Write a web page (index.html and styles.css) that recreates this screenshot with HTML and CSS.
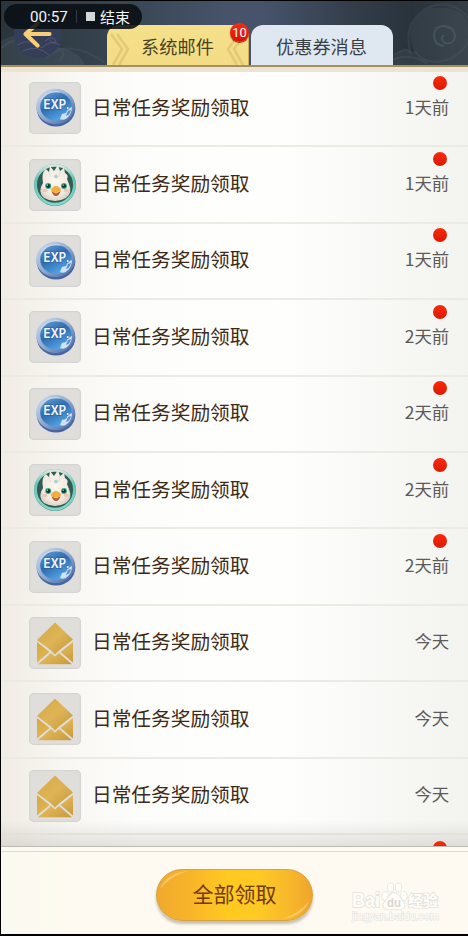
FILE: index.html
```html
<!DOCTYPE html>
<html lang="zh-CN">
<head>
<meta charset="utf-8">
<title>系统邮件</title>
<link rel="stylesheet" href="styles.css">
</head>
<body>
<svg class="defs" width="0" height="0" aria-hidden="true">
  <defs>
    <linearGradient id="ring" x1="0" y1="0" x2="1" y2="1"><stop offset="0" stop-color="#d5dfec"/><stop offset=".5" stop-color="#8fa9cf"/><stop offset="1" stop-color="#4564a3"/></linearGradient>
    <linearGradient id="disc" x1="0" y1="0" x2=".6" y2="1"><stop offset="0" stop-color="#6ba1d5"/><stop offset=".5" stop-color="#2d6cb2"/><stop offset="1" stop-color="#56a6e4"/></linearGradient>
    <linearGradient id="gold" x1="0" y1="0" x2="1" y2="1"><stop offset="0" stop-color="#d8a83f"/><stop offset=".5" stop-color="#deb457"/><stop offset="1" stop-color="#c79838"/></linearGradient>
    <linearGradient id="teal" x1="0" y1="0" x2="0" y2="1"><stop offset="0" stop-color="#d5e9e2"/><stop offset=".35" stop-color="#62c5b3"/><stop offset="1" stop-color="#7fd9cc"/></linearGradient>
    <radialGradient id="face" cx=".5" cy=".45" r=".6"><stop offset="0" stop-color="#fdf7ee"/><stop offset=".7" stop-color="#f1e9df"/><stop offset="1" stop-color="#d8c9bc"/></radialGradient>
  </defs>
  <symbol id="exp" viewBox="0 0 52 52">
    <ellipse cx="27" cy="26.5" rx="19.3" ry="18" fill="#4664a0"/>
    <ellipse cx="26.5" cy="24.5" rx="19.4" ry="17.7" fill="url(#ring)"/>
    <ellipse cx="27" cy="24.5" rx="15.8" ry="14.3" fill="url(#disc)"/>
    <path d="M12 18Q18 8 31 10" fill="none" stroke="#cfe1f4" stroke-width="1.2" opacity=".7"/>
    <path d="M31 37L33 32L37 31L39 27L43 25Q43 32 38 36Q35 39 31 37Z" fill="#cfe2f5"/>
    <path d="M37 34L39 29L42 28Q41 33 37 34Z" fill="#4a91d5"/>
    <text x="27.5" y="27" text-anchor="middle" textLength="26" lengthAdjust="spacingAndGlyphs" class="exp-text">EXP.</text>
  </symbol>
  <symbol id="bird" viewBox="0 0 52 52">
    <circle cx="26" cy="26" r="21" fill="#6c9d92"/>
    <circle cx="26" cy="25.7" r="19.4" fill="#315b54" stroke="url(#teal)" stroke-width="2.7"/>
    <path d="M14 24Q12 13 17 10L20 13L21 7L25 12L29 6L31 12L35 9L36 14Q40 16 38 20L40 25Q44 34 37 39Q26 45 15 39Q8 33 14 24Z" fill="url(#face)"/>
    <path d="M20 13L22 18M31 12L30 18" fill="none" stroke="#dedfd7" stroke-width="1"/>
    <circle cx="27" cy="17.5" r="2" fill="#a9d6d0"/>
    <circle cx="19.2" cy="27" r="3" fill="#39a691"/><circle cx="35" cy="27" r="3" fill="#39a691"/>
    <circle cx="19.3" cy="27" r="2.1" fill="#17372f"/><circle cx="34.9" cy="27" r="2.1" fill="#17372f"/>
    <circle cx="18.5" cy="26.1" r=".7" fill="#fff"/><circle cx="34.2" cy="26.1" r=".7" fill="#fff"/>
    <ellipse cx="16" cy="31.5" rx="2.5" ry="1.4" fill="#f4c1a9"/><ellipse cx="37" cy="31.5" rx="2.5" ry="1.4" fill="#f4c1a9"/>
    <path d="M22.5 32L27 34.5L31.5 32Q30 37 27 37Q24 37 22.5 32Z" fill="#b65a36"/>
    <path d="M21.5 31Q24 27 27 27Q30 27 32.3 31Q29 34 27 34Q24 34 21.5 31Z" fill="#f4ae3c"/>
  </symbol>
  <symbol id="mail" viewBox="0 0 52 52">
    <path d="M8 23L26 5.5L44 22.5L30 33.5L26 37.5L22 33.5Z" fill="url(#gold)"/>
    <path d="M8 25L20.5 35L8 45.5ZM44 25L31.5 35L44 45.5ZM9 47.2L22 36L26 39.5L30 36L43 47.2Z" fill="url(#gold)"/>
  </symbol>
</svg>

<main class="screen">
  <header class="header">
    <svg class="clouds" viewBox="0 0 467 64" aria-hidden="true">
      <g fill="none" stroke="#52636e" stroke-opacity=".25" stroke-width="2">
        <path d="M389 57Q406 43 410 53Q402 27 418 13Q438-4 459 9Q474 18 467 40Q459 58 437 61Q420 61 414 50"/>
        <path stroke-opacity=".5" d="M443 45Q433 44 433 34Q434 25 443 25Q454 26 454 36Q452 44 444 42Q438 38 443 34"/>
        <path d="M386 62Q405 49 427 63"/>
        <path d="M0 47Q21 30 48 43Q70 50 58 60M45 57Q67 36 104 62"/>
      </g>
      <path d="M414 52Q399 20 430 7Q467 4 467 26V64H390Q397 42 414 52Z" fill="#66717a" opacity=".15"/>
      <path d="M0 40Q22 26 40 47Q75 43 84 64H0Z" fill="#60737b" opacity=".22"/>
    </svg>
    <svg class="back" viewBox="0 0 48 48" aria-hidden="true">
      <circle cx="24" cy="24" r="24" fill="#353e58"/>
      <path d="M3 35Q17 27 28 38Q36 29 46 35M9 41Q23 34 35 45M31 31Q40 24 42 32Q37 34 36 30" fill="none" stroke="#66647e" stroke-width="1" opacity=".6"/>
      <path d="M23.5 13.5L11.5 24L23.5 35.5M13 24H35.5" fill="none" stroke="#f9cf75" stroke-width="4.2" stroke-linecap="round" stroke-linejoin="round"/>
    </svg>
    <div class="recorder"><span class="clock">00:57</span><i class="bar"></i><i class="stop"></i><span>结束</span></div>
    <nav class="tabs">
      <div class="tab tab-active">
        <svg class="chevrons" viewBox="0 0 142 40" preserveAspectRatio="none"><path d="M4 9L15 24L6 40M10 9L21 24L12 40M138 9L127 24L136 40M132 9L121 24L130 40" fill="none" stroke="#d8bd6c" stroke-width="2.6" opacity=".6"/></svg>
        <span>系统邮件</span><b class="badge">10</b>
      </div>
      <div class="tab tab-idle"><span>优惠券消息</span></div>
    </nav>
  </header>

  <ul class="list">
    <li class="row"><svg class="icon"><use href="#exp"/></svg><span class="title">日常任务奖励领取</span><time class="time unread">1天前</time></li>
    <li class="row"><svg class="icon"><use href="#bird"/></svg><span class="title">日常任务奖励领取</span><time class="time unread">1天前</time></li>
    <li class="row"><svg class="icon"><use href="#exp"/></svg><span class="title">日常任务奖励领取</span><time class="time unread">1天前</time></li>
    <li class="row"><svg class="icon"><use href="#exp"/></svg><span class="title">日常任务奖励领取</span><time class="time unread">2天前</time></li>
    <li class="row"><svg class="icon"><use href="#exp"/></svg><span class="title">日常任务奖励领取</span><time class="time unread">2天前</time></li>
    <li class="row"><svg class="icon"><use href="#bird"/></svg><span class="title">日常任务奖励领取</span><time class="time unread">2天前</time></li>
    <li class="row"><svg class="icon"><use href="#exp"/></svg><span class="title">日常任务奖励领取</span><time class="time unread">2天前</time></li>
    <li class="row"><svg class="icon"><use href="#mail"/></svg><span class="title">日常任务奖励领取</span><time class="time">今天</time></li>
    <li class="row"><svg class="icon"><use href="#mail"/></svg><span class="title">日常任务奖励领取</span><time class="time">今天</time></li>
    <li class="row"><svg class="icon"><use href="#mail"/></svg><span class="title">日常任务奖励领取</span><time class="time">今天</time></li>
    <li class="row row-peek"><span class="time unread"></span></li>
  </ul>

  <footer class="footer">
    <button class="claim" type="button"><svg class="shine" viewBox="0 0 157 52" aria-hidden="true"><path d="M4 20Q10 4 32 2Q14 7 4 20ZM153 32Q147 48 125 50Q143 45 153 32Z" fill="#ffe08a" opacity=".5"/></svg><span>全部领取</span></button>
    <svg class="watermark" viewBox="0 0 92 44">
      <g class="mark">
        <text x="1" y="26" class="wm-big" textLength="28" lengthAdjust="spacingAndGlyphs">Bai</text>
        <ellipse cx="34" cy="15" rx="2.9" ry="4.2"/><ellipse cx="39.5" cy="6.5" rx="2.9" ry="4.2"/><ellipse cx="47.5" cy="6.5" rx="2.9" ry="4.2"/><ellipse cx="53" cy="15" rx="2.9" ry="4.2"/>
        <path d="M43 12Q47 12 49 17L53 22Q55 27 50 28H35Q31 26 33 22L38 16Q40 12 43 12Z"/>
        <text x="57" y="25" class="wm-cn" textLength="30" lengthAdjust="spacingAndGlyphs">经验</text>
        <text x="1" y="38.5" class="wm-url" textLength="87" lengthAdjust="spacingAndGlyphs">jingyan.baidu.com</text>
      </g>
      <text x="36" y="26" class="wm-du" textLength="14" lengthAdjust="spacingAndGlyphs">du</text>
    </svg>
  </footer>
</main>
</body>
</html>
```
FILE: styles.css
```css
* { box-sizing: border-box; }
body {
  margin: 0;
  background: #000;
  font-family: "Noto Sans CJK SC", sans-serif;
}
.defs { position: absolute; }
.screen {
  width: 468px;
  height: 936px;
  padding: 1px 0 2px 1px;
  display: grid;
  grid-template-rows: 64px 781px 88px;
  overflow: hidden;
}
.header {
  position: relative;
  display: flex;
  align-items: flex-end;
  padding-left: 106px;
  background: linear-gradient(90deg, #2a343c 0, #36434e 22%, #465369 48%, #46536b 56%, #333d48 76%, #29333c 88%, #343e46);
}
.clouds { position: absolute; inset: 0; width: 467px; height: 64px; }
.back { position: absolute; left: 13px; top: 9px; width: 48px; height: 48px; }
.recorder {
  position: absolute;
  left: 3px;
  top: 3px;
  width: 138px;
  height: 25px;
  padding-left: 26px;
  border-radius: 13px;
  background: rgba(9, 15, 19, .88);
  color: #f3f4f5;
  display: flex;
  align-items: center;
  font-size: 15px;
  line-height: 25px;
  z-index: 2;
}
.clock { width: 38px; font-family: Roboto, sans-serif; font-size: 15.2px; padding-top: 1px; }
.bar { width: 1px; height: 13px; margin: 0 9px 0 8px; background: #343b42; }
.stop { width: 9px; height: 9px; margin-right: 5px; background: #d3d7d8; }
.tabs { position: relative; display: flex; gap: 2px; }
.tab {
  position: relative;
  height: 40px;
  display: flex;
  align-items: center;
  justify-content: center;
  border-radius: 12px 12px 0 0;
  font-size: 18.2px;
  line-height: 36px;
  padding: 2px 1px 0 0;
  color: #3a3f44;
}
.tab-active { width: 142px; background: linear-gradient(#f5e08b, #f3dc85); color: #4a431f; box-shadow: inset -1px 0 #c9ad60; }
.tab-idle { width: 142px; background: #dfe8f1; }
.tab span { position: relative; }
.chevrons { position: absolute; inset: 0; width: 142px; height: 40px; }
.badge {
  position: absolute;
  right: 0;
  top: -2px;
  width: 19px;
  height: 19px;
  border-radius: 50%;
  background: linear-gradient(#f52d16, #d91205);
  box-shadow: 0 1px 1px #8c260f;
  color: #fff;
  font: 13px/19px Roboto, sans-serif;
  text-align: center;
}
.list {
  position: relative;
  margin: 0;
  padding: 6px 0 0;
  list-style: none;
  overflow: hidden;
  background: linear-gradient(90deg, #f1ece4 0, #f8f7f3 14%, #fdfdfb 30%, #fefefd 60%, #f8f8f5 82%, #f3f3ef);
}
.list::before {
  content: "";
  position: absolute;
  inset: 0 0 auto;
  height: 5px;
  border-top: 2px solid #a4905f;
  background: #ece3d3;
}
.list::after {
  content: "";
  position: absolute;
  inset: auto 0 0;
  height: 26px;
  background: linear-gradient(rgba(200, 200, 200, 0), rgba(185, 185, 182, .38));
}
.row {
  height: 76.4px;
  display: flex;
  align-items: center;
  padding: 0 19px 0 28px;
  border-bottom: 2px solid #ecebe3;
}
.row-peek { border: 0; z-index: 1; position: relative; }
.icon {
  flex: none;
  width: 52px;
  height: 52px;
  border-radius: 5px;
  background: #dfdedb;
  box-shadow: inset 0 0 0 1.3px #d4d5d3;
}
.exp-text { font: 700 12.5px Inter, sans-serif; fill: #eef3f8; stroke: #2a5b98; stroke-width: 1px; paint-order: stroke; }
.title { margin: -3px 0 0 11px; font-size: 19.7px; line-height: 28px; color: #3d2b18; }
.time { position: relative; margin: -3px 0 0 auto; font-size: 17.4px; line-height: 28px; color: #5b5b59; letter-spacing: -.1px; }
.unread::before {
  content: "";
  position: absolute;
  right: 2px;
  top: -17px;
  width: 14px;
  height: 14px;
  border-radius: 50%;
  background: linear-gradient(#fb2908, #d81b05);
}
.row-peek .unread { height: 28px; }
.footer {
  position: relative;
  display: flex;
  justify-content: center;
  padding-top: 22px;
  background: linear-gradient(90deg, #fafaf0, #fffaf1 15%, #fffaf1);
  border-top: 1px solid #bdbbb1;
}
.footer::before { content: ""; position: absolute; inset: 4px 0 auto; height: 1px; background: #e7d8c9; }
.claim {
  position: relative;
  width: 157px;
  height: 52px;
  padding: 0 0 5px;
  border: 1px solid #d3a344;
  border-radius: 26px;
  background: linear-gradient(90deg, #efa92f, #f9b529 22%, #ffc920 45%, #ffca24 65%, #f8b92b 84%, #efa52c);
  box-shadow: 0 3px 3px rgba(110, 100, 80, .4);
  color: #713b0c;
  font: 21px/44px "Noto Sans CJK SC", sans-serif;
}
.shine { position: absolute; inset: -1px; width: 157px; height: 52px; }
.claim span { position: relative; }
.watermark { position: absolute; left: 350px; top: 34px; width: 92px; height: 44px; }
.mark { fill: #fffefb; stroke: #e3e1dc; stroke-width: 1.6px; paint-order: stroke; }
.wm-big { font: 700 20px "Liberation Sans", sans-serif; }
.wm-du { font: 700 12px "Liberation Sans", sans-serif; fill: #d9d7d2; }
.wm-cn { font: 700 15px "Noto Sans CJK SC", sans-serif; }
.wm-url { font: 10px "Liberation Sans", sans-serif; stroke-width: 1px; }
```
